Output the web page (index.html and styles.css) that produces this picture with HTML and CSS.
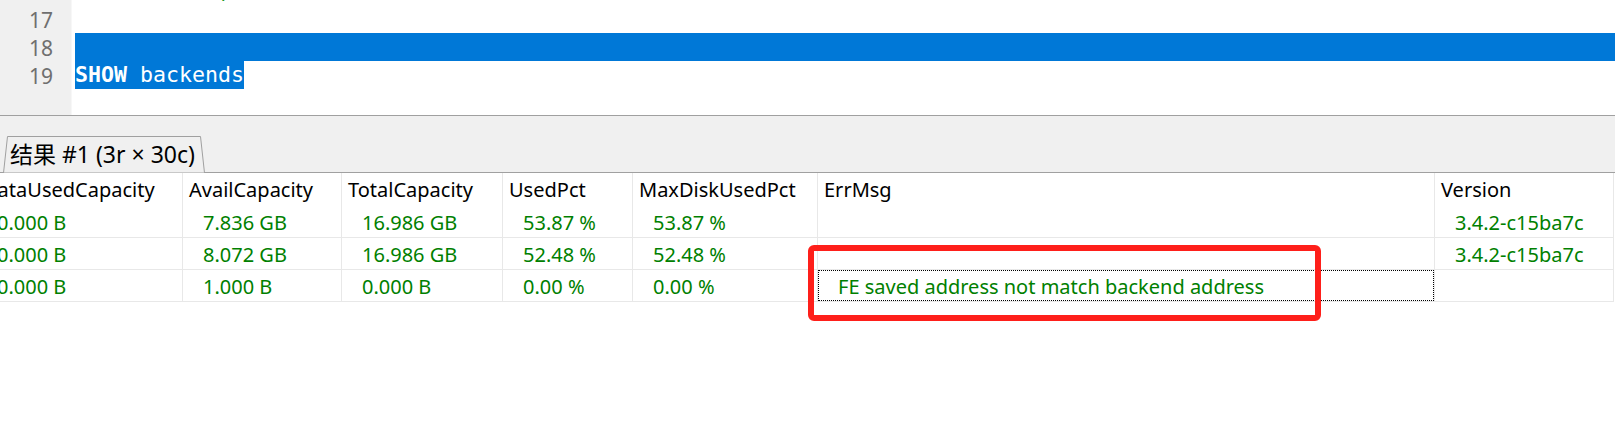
FILE: index.html
```html
<!DOCTYPE html>
<html>
<head>
<meta charset="utf-8">
<link rel="stylesheet" href="styles.css">
</head>
<body>
<div class="editor">
  <div class="gutter">
    <div class="nums">
      <div class="num"></div>
      <div class="num">17</div>
      <div class="num">18</div>
      <div class="num">19</div>
    </div>
  </div>
  <div class="code">
    <div class="codelines">
      <div class="line"><span class="ghost">           </span><span class="str">,</span></div>
      <div class="line"></div>
      <div class="line sel-full"></div>
      <div class="line"><span class="sel"><b>SHOW</b> backends</span></div>
    </div>
  </div>
</div>
<div class="tabstrip">
  <div class="tab">
    <svg class="tabshape" width="203" height="37" viewBox="0 0 203 37"><polygon points="0.5,37 4.5,0.5 197.5,0.5 201.5,37" fill="#f0f0f0" stroke="#a0a0a0" stroke-width="1"/></svg>
    <span class="tablabel">结果 #1 (3r × 30c)</span>
  </div>
</div>
<div class="results">
  <div class="grid">
    <div class="cell head">DataUsedCapacity</div>
    <div class="cell head">AvailCapacity</div>
    <div class="cell head">TotalCapacity</div>
    <div class="cell head">UsedPct</div>
    <div class="cell head">MaxDiskUsedPct</div>
    <div class="cell head">ErrMsg</div>
    <div class="cell head">Version</div>

    <div class="cell">0.000 B</div>
    <div class="cell">7.836 GB</div>
    <div class="cell">16.986 GB</div>
    <div class="cell">53.87 %</div>
    <div class="cell">53.87 %</div>
    <div class="cell"></div>
    <div class="cell">3.4.2-c15ba7c</div>

    <div class="cell">0.000 B</div>
    <div class="cell">8.072 GB</div>
    <div class="cell">16.986 GB</div>
    <div class="cell">52.48 %</div>
    <div class="cell">52.48 %</div>
    <div class="cell"></div>
    <div class="cell">3.4.2-c15ba7c</div>

    <div class="cell">0.000 B</div>
    <div class="cell">1.000 B</div>
    <div class="cell">0.000 B</div>
    <div class="cell">0.00 %</div>
    <div class="cell">0.00 %</div>
    <div class="cell focus"><div class="focusbox">FE saved address not match backend address</div></div>
    <div class="cell"></div>
  </div>
  <div class="callout"></div>
</div>
</body>
</html>
```
FILE: styles.css
```css
html, body {
  margin: 0;
  padding: 0;
  background: #ffffff;
}
body {
  width: 1615px;
  height: 439px;
  overflow: hidden;
  font-family: "Noto Sans", "Noto Sans CJK SC", sans-serif;
}

/* ---------- editor ---------- */
.editor {
  display: flex;
  height: 115px;
  overflow: hidden;
  border-bottom: 1px solid #a0a0a0;
  background: #ffffff;
}
.gutter {
  width: 72px;
  flex: 0 0 72px;
  background: #f0f0f0;
  border-right: 1px solid #f7f7f7;
  box-sizing: border-box;
}
.nums {
  margin-top: -23px;
}
.num {
  height: 28px;
  line-height: 28px;
  padding-top: 1px;
  box-sizing: border-box;
  text-align: right;
  padding-right: 18px;
  font-family: "Noto Sans", sans-serif;
  font-size: 21px;
  color: #6f6f6f;
}
.code {
  flex: 1;
  padding-left: 3px;
}
.codelines {
  margin-top: -23px;
}
.line {
  height: 28px;
  line-height: 28px;
  font-family: "DejaVu Sans Mono", monospace;
  font-size: 21.6px;
  white-space: pre;
  color: #000;
}
.ghost { color: transparent; }
.str { color: #1a9a1a; }
.sel-full { background: #0078d7; }
.sel {
  display: inline-block;
  height: 28px;
  background: #0078d7;
  color: #ffffff;
}
.sel b { font-weight: bold; }

/* ---------- tab strip ---------- */
.tabstrip {
  height: 56px;
  background: #f0f0f0;
  border-bottom: 1px solid #a0a0a0;
  display: flex;
  align-items: flex-end;
  padding-left: 3px;
}
.tab {
  position: relative;
  width: 203px;
  height: 36px;
}
.tabshape {
  position: absolute;
  left: 0;
  top: 0;
}
.tablabel {
  position: relative;
  display: block;
  padding-left: 7px;
  line-height: 36px;
  font-size: 23px;
  color: #000;
  white-space: nowrap;
  font-family: "Noto Sans", "Noto Sans CJK SC", sans-serif;
}

/* ---------- result grid ---------- */
.results {
  position: relative;
}
.grid {
  margin-left: -23px;
  display: grid;
  grid-template-columns: 206px 159px 161px 130px 185px 617px 179px;
  grid-auto-rows: 32px;
  grid-template-rows: 33px;
}
.cell {
  box-sizing: border-box;
  border-right: 1px solid #e8e8e8;
  border-bottom: 1px solid #e8e8e8;
  padding-left: 20px;
  padding-top: 1px;
  line-height: 31px;
  font-size: 20px;
  color: #008000;
  white-space: nowrap;
  overflow: hidden;
}
.cell.head {
  border-bottom: none;
  padding-left: 6px;
  line-height: 32px;
  color: #000;
}
.cell.focus {
  padding-left: 0;
  padding-top: 0;
}
.focusbox {
  height: 31px;
  box-sizing: border-box;
  border: 1px dotted #000;
  padding-left: 19px;
  padding-top: 1px;
  line-height: 29px;
}
.callout {
  position: absolute;
  left: 808px;
  top: 72px;
  width: 513px;
  height: 76px;
  box-sizing: border-box;
  border: 6px solid #fe1f1a;
  border-radius: 6px;
}
```
